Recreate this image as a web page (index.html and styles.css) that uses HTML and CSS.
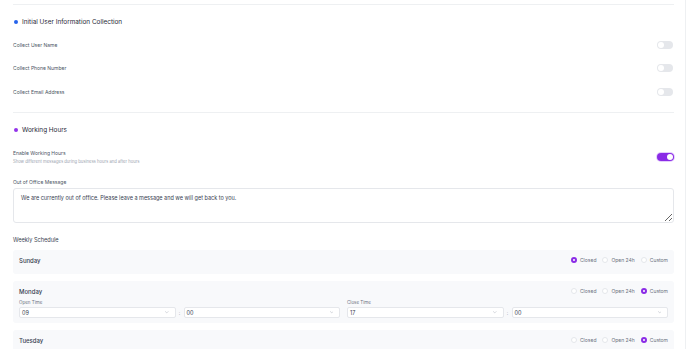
FILE: index.html
```html
<!DOCTYPE html>
<html lang="en">
<head>
  <meta charset="UTF-8">
  <meta name="viewport" content="width=device-width, initial-scale=1.0">
  <title>Bot Settings</title>
  <link rel="stylesheet" href="styles.css">
</head>
<body>
  <div class="panel">
    <div class="divider"></div>

    <div class="section-head">
      <span class="dot dot-blue"></span>
      <h2>Initial User Information Collection</h2>
    </div>
    <div class="rows">
      <div class="row">
        <span class="label">Collect User Name</span>
        <span class="toggle"><span class="knob"></span></span>
      </div>
      <div class="row">
        <span class="label">Collect Phone Number</span>
        <span class="toggle"><span class="knob"></span></span>
      </div>
      <div class="row">
        <span class="label">Collect Email Address</span>
        <span class="toggle"><span class="knob"></span></span>
      </div>
    </div>

    <div class="divider divider-mid"></div>

    <div class="section-head">
      <span class="dot dot-purple"></span>
      <h2>Working Hours</h2>
    </div>
    <div class="row row-enable">
      <div>
        <div class="label">Enable Working Hours</div>
        <div class="desc">Show different messages during business hours and after hours</div>
      </div>
      <span class="toggle toggle-on"><span class="knob"></span></span>
    </div>

    <div class="label field-label">Out of Office Message</div>
    <textarea class="message">We are currently out of office. Please leave a message and we will get back to you.</textarea>

    <div class="label schedule-title">Weekly Schedule</div>

    <div class="day-card">
      <div class="day-head">
        <span class="day-name">Sunday</span>
        <div class="radios">
          <span class="radio-item"><span class="radio checked"></span>Closed</span>
          <span class="radio-item"><span class="radio"></span>Open 24h</span>
          <span class="radio-item"><span class="radio"></span>Custom</span>
        </div>
      </div>
    </div>

    <div class="day-card">
      <div class="day-head">
        <span class="day-name">Monday</span>
        <div class="radios">
          <span class="radio-item"><span class="radio"></span>Closed</span>
          <span class="radio-item"><span class="radio"></span>Open 24h</span>
          <span class="radio-item"><span class="radio checked"></span>Custom</span>
        </div>
      </div>
      <div class="times">
        <div class="time-group">
          <div class="time-label">Open Time</div>
          <div class="time-inputs">
            <div class="select"><span>09</span>
              <svg viewBox="0 0 10 6" fill="none" stroke="#9ca3af" stroke-width="1.2" stroke-linecap="round" stroke-linejoin="round"><path d="M1 1l4 4 4-4"/></svg>
            </div>
            <span class="colon">:</span>
            <div class="select"><span>00</span>
              <svg viewBox="0 0 10 6" fill="none" stroke="#9ca3af" stroke-width="1.2" stroke-linecap="round" stroke-linejoin="round"><path d="M1 1l4 4 4-4"/></svg>
            </div>
          </div>
        </div>
        <div class="time-group">
          <div class="time-label">Close Time</div>
          <div class="time-inputs">
            <div class="select"><span>17</span>
              <svg viewBox="0 0 10 6" fill="none" stroke="#9ca3af" stroke-width="1.2" stroke-linecap="round" stroke-linejoin="round"><path d="M1 1l4 4 4-4"/></svg>
            </div>
            <span class="colon">:</span>
            <div class="select"><span>00</span>
              <svg viewBox="0 0 10 6" fill="none" stroke="#9ca3af" stroke-width="1.2" stroke-linecap="round" stroke-linejoin="round"><path d="M1 1l4 4 4-4"/></svg>
            </div>
          </div>
        </div>
      </div>
    </div>

    <div class="day-card day-card-last">
      <div class="day-head">
        <span class="day-name">Tuesday</span>
        <div class="radios">
          <span class="radio-item"><span class="radio"></span>Closed</span>
          <span class="radio-item"><span class="radio"></span>Open 24h</span>
          <span class="radio-item"><span class="radio checked"></span>Custom</span>
        </div>
      </div>
    </div>
  </div>
</body>
</html>
```

FILE: styles.css
```css
html, body {
  margin: 0;
  padding: 0;
  background-color: white;
  overflow: hidden;
}
body {
  font-family: Inter, "Noto Sans", sans-serif;
  color: #374151;
  height: 349px;
}
.panel {
  box-sizing: border-box;
  width: 686px;
  height: 349px;
  padding: 4px 11px 0 13px;
  border-right: 1px solid #eef0f2;
  overflow: hidden;
}
.divider {
  border-top: 1px solid #eef0f2;
}
.divider-mid {
  margin-top: 14.5px;
}
.section-head {
  display: flex;
  align-items: center;
  gap: 4px;
  height: 10px;
  margin-top: 12px;
}
.dot {
  width: 4px;
  height: 4px;
  margin-left: 1px;
  border-radius: 50%;
}
.dot-blue {
  background-color: #2563eb;
}
.dot-purple {
  background-color: #9333ea;
}
h2 {
  margin: 0;
  font-size: 6.4px;
  line-height: 10px;
  font-weight: 400;
  color: #1f2937;
}
.rows {
  display: flex;
  flex-direction: column;
  gap: 11.25px;
  margin-top: 12px;
}
.row {
  display: flex;
  align-items: center;
  justify-content: space-between;
  height: 12px;
}
.label {
  font-size: 5px;
  line-height: 8px;
  color: #4b5563;
}
.desc {
  margin-top: 2px;
  font-size: 4.2px;
  line-height: 6px;
  color: #9ca3af;
}
.toggle {
  position: relative;
  box-sizing: border-box;
  width: 16px;
  height: 8px;
  margin-right: 1px;
  border-radius: 4px;
  background-color: #e5e7eb;
}
.toggle .knob {
  position: absolute;
  top: 1px;
  left: 1px;
  width: 6px;
  height: 6px;
  border-radius: 50%;
  background-color: white;
}
.toggle-on {
  width: 17px;
  margin-right: 0;
  background-color: #8a2be6;
  box-shadow: 0 0 0 1px #e4cdfc;
}
.toggle-on .knob {
  left: auto;
  right: 1px;
}
.row-enable {
  height: 16px;
  margin-top: 14px;
}
.field-label {
  margin-top: 13px;
}
.message {
  display: block;
  box-sizing: border-box;
  width: 661px;
  height: 35px;
  margin: 2px 0 0;
  padding: 5px 7px;
  border: 1px solid #e5e7eb;
  border-radius: 3px;
  font-family: Inter, "Noto Sans", sans-serif;
  font-size: 5.5px;
  line-height: 8px;
  color: #374151;
  resize: vertical;
  outline: none;
}
.schedule-title {
  margin-top: 13px;
  margin-bottom: -1px;
  font-size: 5.6px;
  color: #374151;
}
.day-card {
  margin-top: 7px;
  padding: 6px 6px 5px;
  border-radius: 3px;
  background-color: #f8f9fb;
}
.day-card-last {
  min-height: 30px;
}
.day-head {
  display: flex;
  align-items: center;
  justify-content: space-between;
  height: 8px;
  margin-bottom: 5px;
}
.day-name {
  font-size: 6px;
  font-weight: 500;
  color: #374151;
}
.radios {
  display: flex;
  align-items: center;
  gap: 6px;
}
.radio-item {
  display: flex;
  align-items: center;
  gap: 3px;
  font-size: 5px;
  color: #6b7280;
}
.radio {
  box-sizing: border-box;
  width: 6px;
  height: 6px;
  border-radius: 50%;
  border: 1px solid #e5e7eb;
  background-color: white;
}
.radio.checked {
  border: 2px solid #8a2be6;
}
.times {
  display: flex;
  gap: 7px;
}
.time-group {
  flex: 1;
}
.time-label {
  font-size: 4.5px;
  line-height: 5px;
  color: #6b7280;
  margin-bottom: 2px;
}
.time-inputs {
  display: flex;
  align-items: center;
}
.select {
  flex: 1;
  display: flex;
  align-items: center;
  justify-content: space-between;
  box-sizing: border-box;
  height: 11px;
  padding: 0 6px 0 2px;
  border: 1px solid #e5e7eb;
  border-radius: 2px;
  background-color: white;
  font-size: 5.5px;
  color: #374151;
}
.select svg {
  width: 3.5px;
  height: 2.5px;
}
.colon {
  width: 8px;
  text-align: center;
  font-size: 5px;
  color: #9ca3af;
}
```
